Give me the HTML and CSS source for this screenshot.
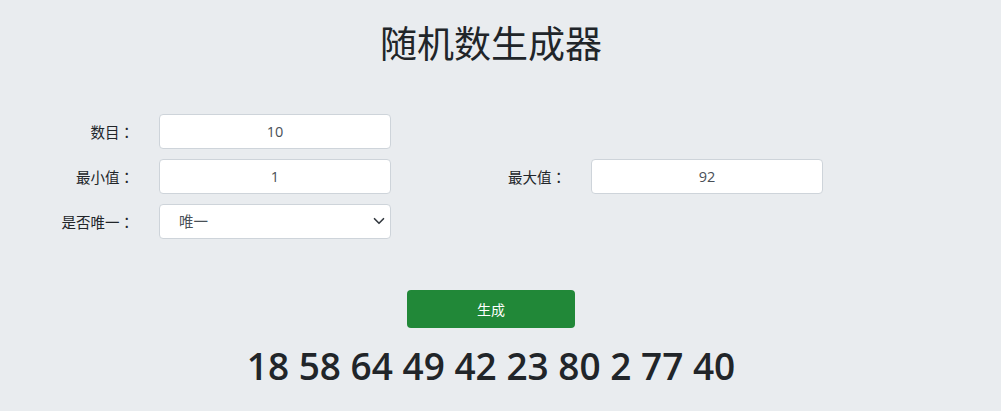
FILE: index.html
```html
<!DOCTYPE html>
<html lang="zh-CN">
<head>
    <meta charset="UTF-8">
    <meta name="viewport" content="width=device-width, initial-scale=1.0">
    <title>随机数生成器</title>
    <link rel="stylesheet" href="styles.css">
</head>
<body>
    <div class="page">
        <h1 class="title">随机数生成器</h1>

        <form class="gen-form" onsubmit="return false">
            <label class="field-label" for="count">数目<span class="colon">：</span></label>
            <input class="field" type="text" id="count" value="10">
            <span></span><span></span>

            <label class="field-label" for="min">最小值<span class="colon">：</span></label>
            <input class="field" type="text" id="min" value="1">
            <label class="field-label" for="max">最大值<span class="colon">：</span></label>
            <input class="field" type="text" id="max" value="92">

            <label class="field-label" for="unique">是否唯一<span class="colon">：</span></label>
            <div class="select-wrap">
                <select class="field select" id="unique">
                    <option>唯一</option>
                    <option>可重复</option>
                </select>
                <svg class="chevron" width="12" height="12" viewBox="0 0 16 16">
                    <path d="M2 5l6 6 6-6" fill="none" stroke="#343a40" stroke-width="2.2" stroke-linecap="round" stroke-linejoin="round"/>
                </svg>
            </div>
        </form>

        <div class="actions">
            <button class="btn-generate" type="button">生成</button>
        </div>

        <div class="result">18 58 64 49 42 23 80 2 77 40</div>
    </div>
</body>
</html>
```

FILE: styles.css
```css
body {
    margin: 0;
    background: #e9ecef;
    color: #212529;
    font-family: "Open Sans", "Noto Sans CJK SC", sans-serif;
}
.page {
    width: 982px;
}
.title {
    margin: 22px 0 0;
    font-size: 37px;
    font-weight: 400;
    line-height: 44px;
    text-align: center;
}
.gen-form {
    display: grid;
    grid-template-columns: 134px 232px 150px 232px;
    grid-auto-rows: 35px;
    column-gap: 25px;
    row-gap: 10px;
    margin-top: 48px;
}
.field-label {
    display: flex;
    align-items: center;
    justify-content: flex-end;
    font-size: 14.5px;
}
/* full-width colon, centred in its cell */
.colon {
    font-family: "Noto Sans CJK TC", sans-serif;
}
.field {
    box-sizing: border-box;
    width: 100%;
    height: 35px;
    padding: 6px 12px;
    border: 1px solid #ced4da;
    border-radius: 4px;
    background: #fff;
    color: #495057;
    font-family: inherit;
    font-size: 14.5px;
    text-align: center;
    outline: none;
}
.select-wrap {
    position: relative;
}
.select {
    appearance: none;
    -webkit-appearance: none;
    text-align: left;
    padding-left: 19px;
}
.chevron {
    position: absolute;
    right: 6px;
    top: 11px;
    pointer-events: none;
}
.actions {
    display: flex;
    justify-content: center;
    margin-top: 51px;
}
.btn-generate {
    width: 168px;
    height: 38px;
    border: none;
    border-radius: 4px;
    background: #218838;
    color: #fff;
    font-family: inherit;
    font-size: 14px;
    cursor: pointer;
}
.result {
    margin-top: 16px;
    font-size: 37px;
    font-weight: 600;
    line-height: 44px;
    text-align: center;
}
```
